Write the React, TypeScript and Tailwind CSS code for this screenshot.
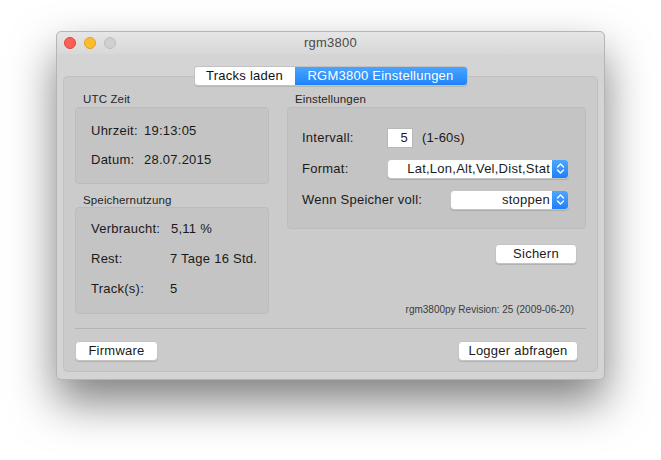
import React from 'react';

const font = { fontFamily: '"Liberation Sans", Arial, sans-serif' };

function TrafficLights() {
  return (
    <div className="flex items-center gap-[8px] pl-[7px]">
      <span className="w-[12px] h-[12px] rounded-full bg-[#fc5f57] border border-[#e0443e]" />
      <span className="w-[12px] h-[12px] rounded-full bg-[#fdbc2e] border border-[#dea123]" />
      <span className="w-[12px] h-[12px] rounded-full bg-[#d0d0d0] border border-[#bdbdbd]" />
    </div>
  );
}

function Button({ label, width }: { label: string; width: string }) {
  return (
    <button
      className={`${width} h-[20px] rounded-[4px] bg-white border border-[#c4c4c4] shadow-[0_1px_0_rgba(0,0,0,0.12)] text-[13px] tracking-[0.25px] leading-[18px] text-[#1a1a1a] text-center`}
    >
      {label}
    </button>
  );
}

function Popup({ value, width }: { value: string; width: string }) {
  return (
    <div
      className={`${width} h-[20px] flex rounded-[4px] bg-white border border-[#c4c4c4] shadow-[0_1px_0_rgba(0,0,0,0.12)] overflow-hidden`}
    >
      <div className="flex-1 text-right pr-[2px] leading-[18px] text-[#1a1a1a] whitespace-nowrap overflow-hidden">
        {value}
      </div>
      <div className="w-[16px] h-full bg-gradient-to-b from-[#4ea6fe] to-[#1c80fb] flex items-center justify-center">
        <svg width="9" height="13" viewBox="0 0 9 13" fill="none" stroke="white" strokeWidth="1.4" strokeLinecap="round" strokeLinejoin="round">
          <path d="M1.5 5 L4.5 2 L7.5 5" />
          <path d="M1.5 8 L4.5 11 L7.5 8" />
        </svg>
      </div>
    </div>
  );
}

function GroupLabel({ children }: { children: React.ReactNode }) {
  return (
    <div className="pl-[8px] text-[11.5px] tracking-[0.15px] leading-[14px] h-[14px] text-[#262626]">{children}</div>
  );
}

export default function App() {
  return (
    <div className="w-[661px] h-[460px] bg-white pt-[31px] pl-[56px]" style={font}>
      <div className="w-[549px] h-[349px] rounded-[5px] bg-[#d4d4d4] border border-[#b5b5b5] shadow-[0_22px_45px_rgba(0,0,0,0.5)] flex flex-col">
        {/* title bar */}
        <div className="relative h-[22px] rounded-t-[5px] bg-gradient-to-b from-[#e6e6e6] to-[#d8d8d8] flex items-center">
          <TrafficLights />
          <div className="absolute inset-0 flex items-center justify-center text-[13px] tracking-[0.25px] text-[#4a4a4a]">rgm3800</div>
        </div>

        <div className="flex-1 px-[6px] pt-[12px] pb-[7px] flex flex-col">
          {/* tabs */}
          <div className="relative z-10 flex justify-center">
            <div className="flex h-[20px] rounded-[4px] border border-[#c2c2c2] overflow-hidden shadow-[0_1px_0_rgba(0,0,0,0.1)] text-[13px] tracking-[0.25px] leading-[18px]">
              <div className="w-[100px] bg-white text-center text-[#111]">Tracks laden</div>
              <div className="w-[172px] bg-gradient-to-b from-[#4aa4fe] to-[#1a84fb] text-center text-white">
                RGM3800 Einstellungen
              </div>
            </div>
          </div>

          {/* tab box */}
          <div className="-mt-[10px] flex-1 rounded-[5px] bg-[#cbcbcb] border border-[#c0c0c0] px-[11px] pt-[15px] pb-[10px] flex flex-col">
            <div className="flex gap-[18px] text-[13px] tracking-[0.25px] text-[#1a1a1a]">
              {/* left column */}
              <div className="w-[194px] flex flex-col">
                <GroupLabel>UTC Zeit</GroupLabel>
                <div className="mt-[1px] h-[77px] rounded-[4px] bg-[#c4c4c4] border border-[#bcbcbc] pt-[8px] pl-[15px]">
                  <div className="h-[29px] flex items-center">
                    <span className="w-[53px]">Uhrzeit:</span>
                    <span>19:13:05</span>
                  </div>
                  <div className="h-[29px] flex items-center">
                    <span className="w-[53px]">Datum:</span>
                    <span>28.07.2015</span>
                  </div>
                </div>
                <div className="mt-[9px]">
                  <GroupLabel>Speichernutzung</GroupLabel>
                </div>
                <div className="h-[107px] rounded-[4px] bg-[#c4c4c4] border border-[#bcbcbc] pt-[6px] pl-[15px]">
                  <div className="h-[30px] flex items-center">
                    <span className="w-[80px]">Verbraucht:</span>
                    <span>5,11 %</span>
                  </div>
                  <div className="h-[30px] flex items-center">
                    <span className="w-[79px]">Rest:</span>
                    <span>7 Tage 16 Std.</span>
                  </div>
                  <div className="h-[30px] flex items-center">
                    <span className="w-[79px]">Track(s):</span>
                    <span>5</span>
                  </div>
                </div>
              </div>

              {/* right column */}
              <div className="w-[299px] flex flex-col">
                <GroupLabel>Einstellungen</GroupLabel>
                <div className="mt-[1px] h-[122px] rounded-[4px] bg-[#c4c4c4] border border-[#bcbcbc] pt-[14px] pl-[14px] pr-[16px]">
                  <div className="h-[31px] flex items-center">
                    <span className="w-[85px]">Intervall:</span>
                    <div className="w-[26px] h-[20px] bg-white border border-[#b8b8b8] text-right pr-[4px] leading-[18px]">5</div>
                    <span className="ml-[9px]">(1-60s)</span>
                  </div>
                  <div className="h-[31px] flex items-center">
                    <span className="w-[85px]">Format:</span>
                    <Popup value="Lat,Lon,Alt,Vel,Dist,Stat" width="w-[182px]" />
                  </div>
                  <div className="h-[31px] flex items-center">
                    <span>Wenn Speicher voll:</span>
                    <div className="ml-auto">
                      <Popup value="stoppen" width="w-[119px]" />
                    </div>
                  </div>
                </div>
                <div className="mt-[15px] flex justify-end pr-[9px]">
                  <Button label="Sichern" width="w-[82px]" />
                </div>
                <div className="mt-[40px] text-right pr-[12px] text-[10px] tracking-normal leading-[12px] text-[#3c3c3c]">
                  rgm3800py Revision: 25 (2009-06-20)
                </div>
              </div>
            </div>

            <div className="mt-auto h-px bg-[#b4b4b4]" />
            <div className="mt-[12px] flex justify-between pr-[8px]">
              <Button label="Firmware" width="w-[83px]" />
              <Button label="Logger abfragen" width="w-[120px]" />
            </div>
          </div>
        </div>
      </div>
    </div>
  );
}
